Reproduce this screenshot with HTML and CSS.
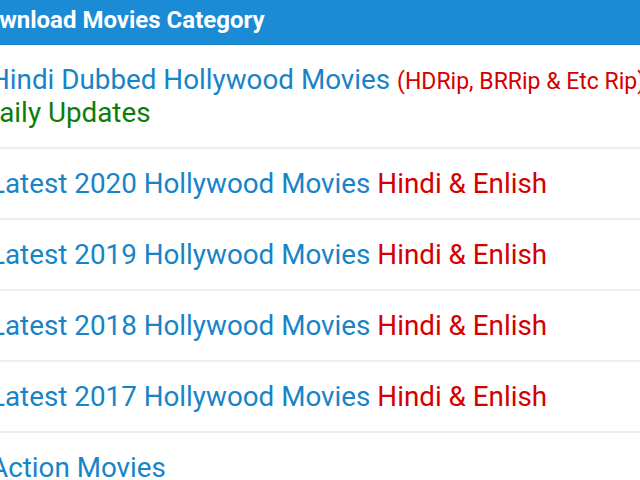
FILE: index.html
```html
<!DOCTYPE html>
<html>
<head>
<meta charset="utf-8">
<link rel="stylesheet" href="styles.css">
</head>
<body>
<div class="widget">
  <h2 class="title">Download Movies Category</h2>
  <ul class="list">
    <li class="item first"><span class="line"><a class="link">Hindi Dubbed Hollywood Movies</a> <span class="tag small">(HDRip, BRRip &amp; Etc Rip)</span></span><span class="daily">Daily Updates</span></li>
    <li class="item"><a class="link">Latest 2020 Hollywood Movies</a> <span class="tag">Hindi &amp; Enlish</span></li>
    <li class="item"><a class="link">Latest 2019 Hollywood Movies</a> <span class="tag">Hindi &amp; Enlish</span></li>
    <li class="item"><a class="link">Latest 2018 Hollywood Movies</a> <span class="tag">Hindi &amp; Enlish</span></li>
    <li class="item"><a class="link">Latest 2017 Hollywood Movies</a> <span class="tag">Hindi &amp; Enlish</span></li>
    <li class="item"><a class="link">Action Movies</a></li>
  </ul>
</div>
</body>
</html>
```

FILE: styles.css
```css
html, body {
  margin: 0;
  padding: 0;
  background: #ffffff;
  overflow: hidden;
}
body {
  font-family: Roboto, "Liberation Sans", sans-serif;
  width: 640px;
  height: 480px;
}
.widget {
  width: 720px;
}
.title {
  margin: 0 0 0 -30px;
  padding: 0 0 4px 0;
  background: #1b8bd6;
  color: #ffffff;
  font-weight: 700;
  font-size: 24px;
  line-height: 40px;
  height: 40px;
  border-bottom: 1px solid #1a7fc4;
  white-space: nowrap;
}
.list {
  list-style: none;
  margin: 0 0 0 -10px;
  padding: 0;
}
.item {
  font-size: 27.8px;
  line-height: 31px;
  padding: 19px 0;
  border-bottom: 2px solid #eeeeee;
  white-space: nowrap;
}
.item.first {
  padding-top: 19px;
  padding-bottom: 19px;
}
.line {
  display: block;
}
.link {
  color: #1784c8;
}
.tag {
  color: #d40000;
}
.tag.small {
  font-size: 23px;
}
.daily {
  display: block;
  margin-left: -9px;
  color: #0a7d0a;
}
```
